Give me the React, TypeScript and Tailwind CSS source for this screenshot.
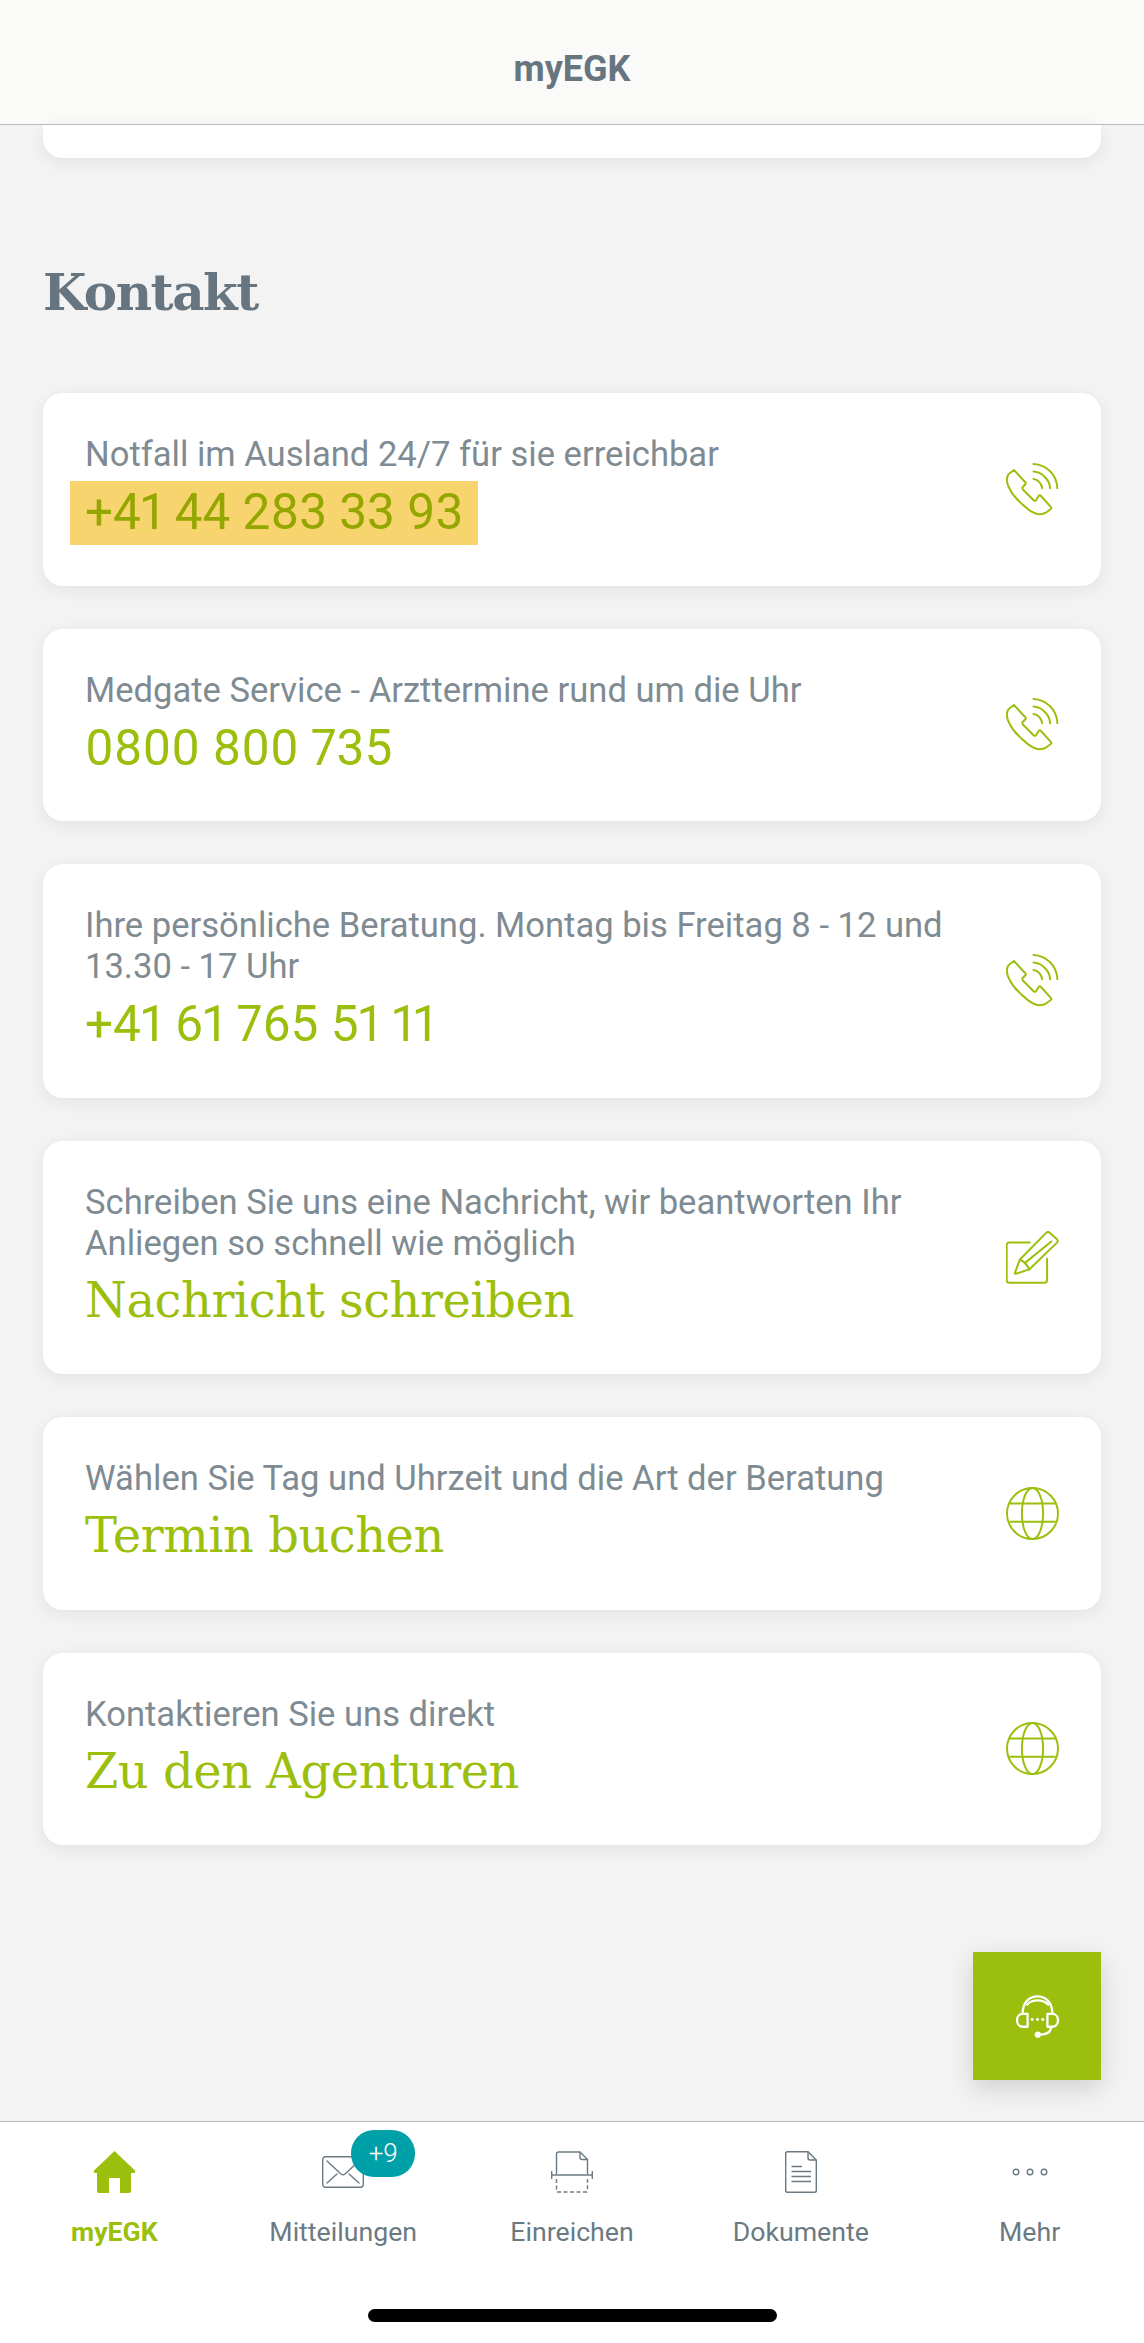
import type { ReactNode } from "react"

const GREEN = "#9bbf0c"

function PhoneIcon() {
    return (
        <svg width="53" height="53" viewBox="138 65 160 160" fill="none" stroke={GREEN} strokeWidth="6" strokeLinecap="round" strokeLinejoin="round">
            <path d="M162 86 L197 124 Q199 127 196 130 L188 138 Q186 141 189 145 L222 178 Q226 181 229 177 L237 164 Q240 161 243 164 L274 198 Q276 201 273 204 L258 215 C245 223 225 220 205 205 C180 185 160 165 150 145 C138 125 138 110 146 98 Z" />
            <path d="M221 68 C260 70 292 100 293 141" />
            <path d="M221 91 C245 92 270 115 271 141" />
            <path d="M221 113 C235 114 246 128 247 141" />
        </svg>
    )
}

function EditIcon() {
    return (
        <svg width="53" height="53" viewBox="138 92 160 160" fill="none" stroke={GREEN} strokeWidth="6" strokeLinecap="round" strokeLinejoin="round">
            <path d="M210 127 H148 Q140 127 140 135 V240 Q140 248 148 248 H254 Q262 248 262 240 V176" />
            <path d="M180 178 L260 97 Q265 93 270 97 L292 117 Q296 122 292 127 L208 208 L168 221 Q164 222 165 218 Z" />
            <path d="M180 178 Q200 188 208 208" />
            <path d="M198 186 L275 124" />
        </svg>
    )
}

function GlobeIcon() {
    return (
        <svg width="53" height="53" viewBox="138 80 160 160" fill="none" stroke={GREEN} strokeWidth="6">
            <circle cx="218" cy="160" r="77" />
            <ellipse cx="218" cy="160" rx="32" ry="77" />
            <path d="M148 130 H288 M148 185 H288" />
        </svg>
    )
}

function HeadsetIcon() {
    return (
        <svg width="43" height="43" viewBox="198 193 130 130" fill="none" stroke="#fff" strokeWidth="7" strokeLinecap="round" strokeLinejoin="round">
            <path d="M218 250 C218 215 238 197 263 197 C288 197 308 215 308 250" />
            <path d="M232 222 C245 205 281 205 295 222" />
            <path d="M219 250 C207 250 201 260 201 269 C201 279 207 289 219 289 L233 289 L233 250 Z" />
            <path d="M307 250 C319 250 325 260 325 269 C325 279 319 289 307 289 L293 289 L293 250 Z" />
            <path d="M304 290 C304 305 290 313 266 313" />
            <circle cx="264" cy="313" r="6" fill="#fff" />
            <circle cx="247" cy="267" r="4.500" fill="#fff" stroke="none" />
            <circle cx="263" cy="267" r="4.500" fill="#fff" stroke="none" />
            <circle cx="279" cy="267" r="4.500" fill="#fff" stroke="none" />
        </svg>
    )
}

function HomeIcon() {
    return (
        <svg width="43" height="42" viewBox="0 0 43 42">
            <path fill={GREEN} d="M21.5 0 L42 19.5 Q43 21.5 41 22 H38 V40 Q38 42 36 42 H27 V27 H16 V42 H7 Q4 42 4 40 V22 H2 Q0 21.5 1 19.5 Z" />
        </svg>
    )
}

function MailIcon() {
    return (
        <svg width="42" height="32" viewBox="0 0 42 32" fill="none" stroke="#6b7a82" strokeWidth="1.400" strokeLinecap="round">
            <rect x="0.700" y="0.700" width="40.600" height="30.600" rx="3" />
            <path d="M5 5 L19 18 Q21 19.500 23 18 L37 5" />
            <path d="M5 27 L15 18 M37 27 L27 18" />
        </svg>
    )
}

function SubmitIcon() {
    return (
        <svg width="42" height="42" viewBox="0 0 42 42" fill="none" stroke="#6b7a82" strokeWidth="1.400">
            <path d="M5.500 23 V3 Q5.500 1 7.500 1 H29 L36.500 8.500 V23" />
            <path d="M29 1 V6.500 Q29 8.500 31 8.500 H36.500" />
            <path d="M0.700 24 H41.300 M0.700 20 V28 M41.300 20 V28" />
            <path d="M5.500 28 V40 Q5.500 41 6.500 41 H35.500 Q36.500 41 36.500 40 V28" strokeDasharray="4 2.500" />
        </svg>
    )
}

function DocIcon() {
    return (
        <svg width="32" height="42" viewBox="0 0 32 42" fill="none" stroke="#6b7a82" strokeWidth="1.400">
            <path d="M23 0.700 H2.500 Q0.700 0.700 0.700 2.500 V39.500 Q0.700 41.300 2.500 41.300 H29.500 Q31.300 41.300 31.300 39.500 V9 Z" />
            <path d="M23 0.700 V7 Q23 9 25 9 H31.300" />
            <path d="M6.500 15.500 H17 M6.500 20.500 H26 M6.500 25.500 H26 M6.500 30.500 H26" />
        </svg>
    )
}

function MoreIcon() {
    return (
        <svg width="36" height="8" viewBox="0 0 36 8" fill="none" stroke="#6b7a82" strokeWidth="1.400">
            <circle cx="4" cy="4" r="2.800" />
            <circle cx="18" cy="4" r="2.800" />
            <circle cx="32" cy="4" r="2.800" />
        </svg>
    )
}

interface ContactCardProps {
    label: string[]
    value: string
    slab?: boolean
    highlight?: boolean
    icon: ReactNode
}

function ContactCard(props: ContactCardProps) {
    return (
        <div className="flex items-center justify-between bg-white rounded-[20px] pl-[42px] pr-[42px] py-[41px] shadow-[0_4px_18px_rgba(0,0,0,0.07)]">
            <div className="flex flex-col items-start">
                {props.label.map((line) => (
                    <p key={line} className="text-[34.6px] leading-[41px] text-[#7f8b92] font-['Roboto',sans-serif]">{line}</p>
                ))}
                {props.highlight ? (
                    <p className="mt-[6px] -ml-[15px] px-[15px] h-[63.5px] leading-[63px] bg-[#f8d46e] text-[49.5px] proportional-nums text-[#94a600] font-['Roboto',sans-serif]">{props.value}</p>
                ) : props.slab ? (
                    <p className="mt-[6px] h-[63.5px] leading-[60px] text-[48px] tracking-[-0.5px] text-[#9bbf0c] font-['DejaVu_Serif',serif]">{props.value}</p>
                ) : (
                    <p className="mt-[6px] h-[63.5px] leading-[63px] text-[49.5px] proportional-nums text-[#9bbf0c] font-['Roboto',sans-serif]">{props.value}</p>
                )}
            </div>
            {props.icon}
        </div>
    )
}

function Tab(props: { label: string; active?: boolean; icon: ReactNode; badge?: string }) {
    return (
        <div className="relative flex flex-col items-center">
            <div className="h-[42px] flex items-center justify-center">
                <div className="relative flex items-center justify-center">
                    {props.icon}
                    {props.badge && (
                        <span className="absolute left-[29px] -top-[26px] w-[64px] h-[47px] rounded-[23px] bg-[#00a0a8] text-white text-[26px] leading-[47px] text-center font-['Roboto',sans-serif] font-light">{props.badge}</span>
                    )}
                </div>
            </div>
            <span className={props.active
                ? "mt-[21px] text-[26.7px] leading-[36px] font-bold text-[#9bbf0c] font-['Roboto',sans-serif]"
                : "mt-[21px] text-[26.7px] leading-[36px] text-[#6b7a82] font-['Roboto',sans-serif]"}>{props.label}</span>
        </div>
    )
}

export default function App() {
    return (
        <div className="relative flex flex-col w-[1144px] h-[2343px] overflow-hidden bg-[#f3f3f3]">
            <header className="h-[125px] shrink-0 flex items-center justify-center pt-[14px] bg-[#fafaf8] border-b border-[#bcbcbc]">
                <h1 className="text-[36px] font-bold text-[#66757f] font-['Roboto',sans-serif]">myEGK</h1>
            </header>

            <main className="relative flex-1 px-[43px]">
                <div className="h-[33px] bg-white rounded-b-[20px] shadow-[0_4px_18px_rgba(0,0,0,0.07)]"></div>
                <h2 className="mt-[100px] mb-[65px] h-[70px] leading-[70px] text-[50px] tracking-[-1.5px] font-bold text-[#66757f] font-['DejaVu_Serif',serif]">Kontakt</h2>
                <div className="flex flex-col gap-[43px]">
                    <ContactCard label={["Notfall im Ausland 24/7 für sie erreichbar"]} value="+41 44 283 33 93" highlight icon={<PhoneIcon />} />
                    <ContactCard label={["Medgate Service - Arzttermine rund um die Uhr"]} value="0800 800 735" icon={<PhoneIcon />} />
                    <ContactCard label={["Ihre persönliche Beratung. Montag bis Freitag 8 - 12 und", "13.30 - 17 Uhr"]} value="+41 61 765 51 11" icon={<PhoneIcon />} />
                    <ContactCard label={["Schreiben Sie uns eine Nachricht, wir beantworten Ihr", "Anliegen so schnell wie möglich"]} value="Nachricht schreiben" slab icon={<EditIcon />} />
                    <ContactCard label={["Wählen Sie Tag und Uhrzeit und die Art der Beratung"]} value="Termin buchen" slab icon={<GlobeIcon />} />
                    <ContactCard label={["Kontaktieren Sie uns direkt"]} value="Zu den Agenturen" slab icon={<GlobeIcon />} />
                </div>

                <button type="button" className="absolute right-[43px] bottom-[41px] w-[128px] h-[128px] flex items-center justify-center bg-[#9bbf0c] shadow-[0_8px_24px_rgba(0,0,0,0.15)]">
                    <HeadsetIcon />
                </button>
            </main>

            <nav className="h-[222px] shrink-0 bg-white border-t border-[#bcbcbc] flex flex-col">
                <div className="grid grid-cols-5 pt-[29px]">
                    <Tab label="myEGK" active icon={<HomeIcon />} />
                    <Tab label="Mitteilungen" badge="+9" icon={<MailIcon />} />
                    <Tab label="Einreichen" icon={<SubmitIcon />} />
                    <Tab label="Dokumente" icon={<DocIcon />} />
                    <Tab label="Mehr" icon={<MoreIcon />} />
                </div>
                <div className="mt-[59px] mx-auto w-[409px] h-[13px] rounded-full bg-black"></div>
            </nav>
        </div>
    )
}
